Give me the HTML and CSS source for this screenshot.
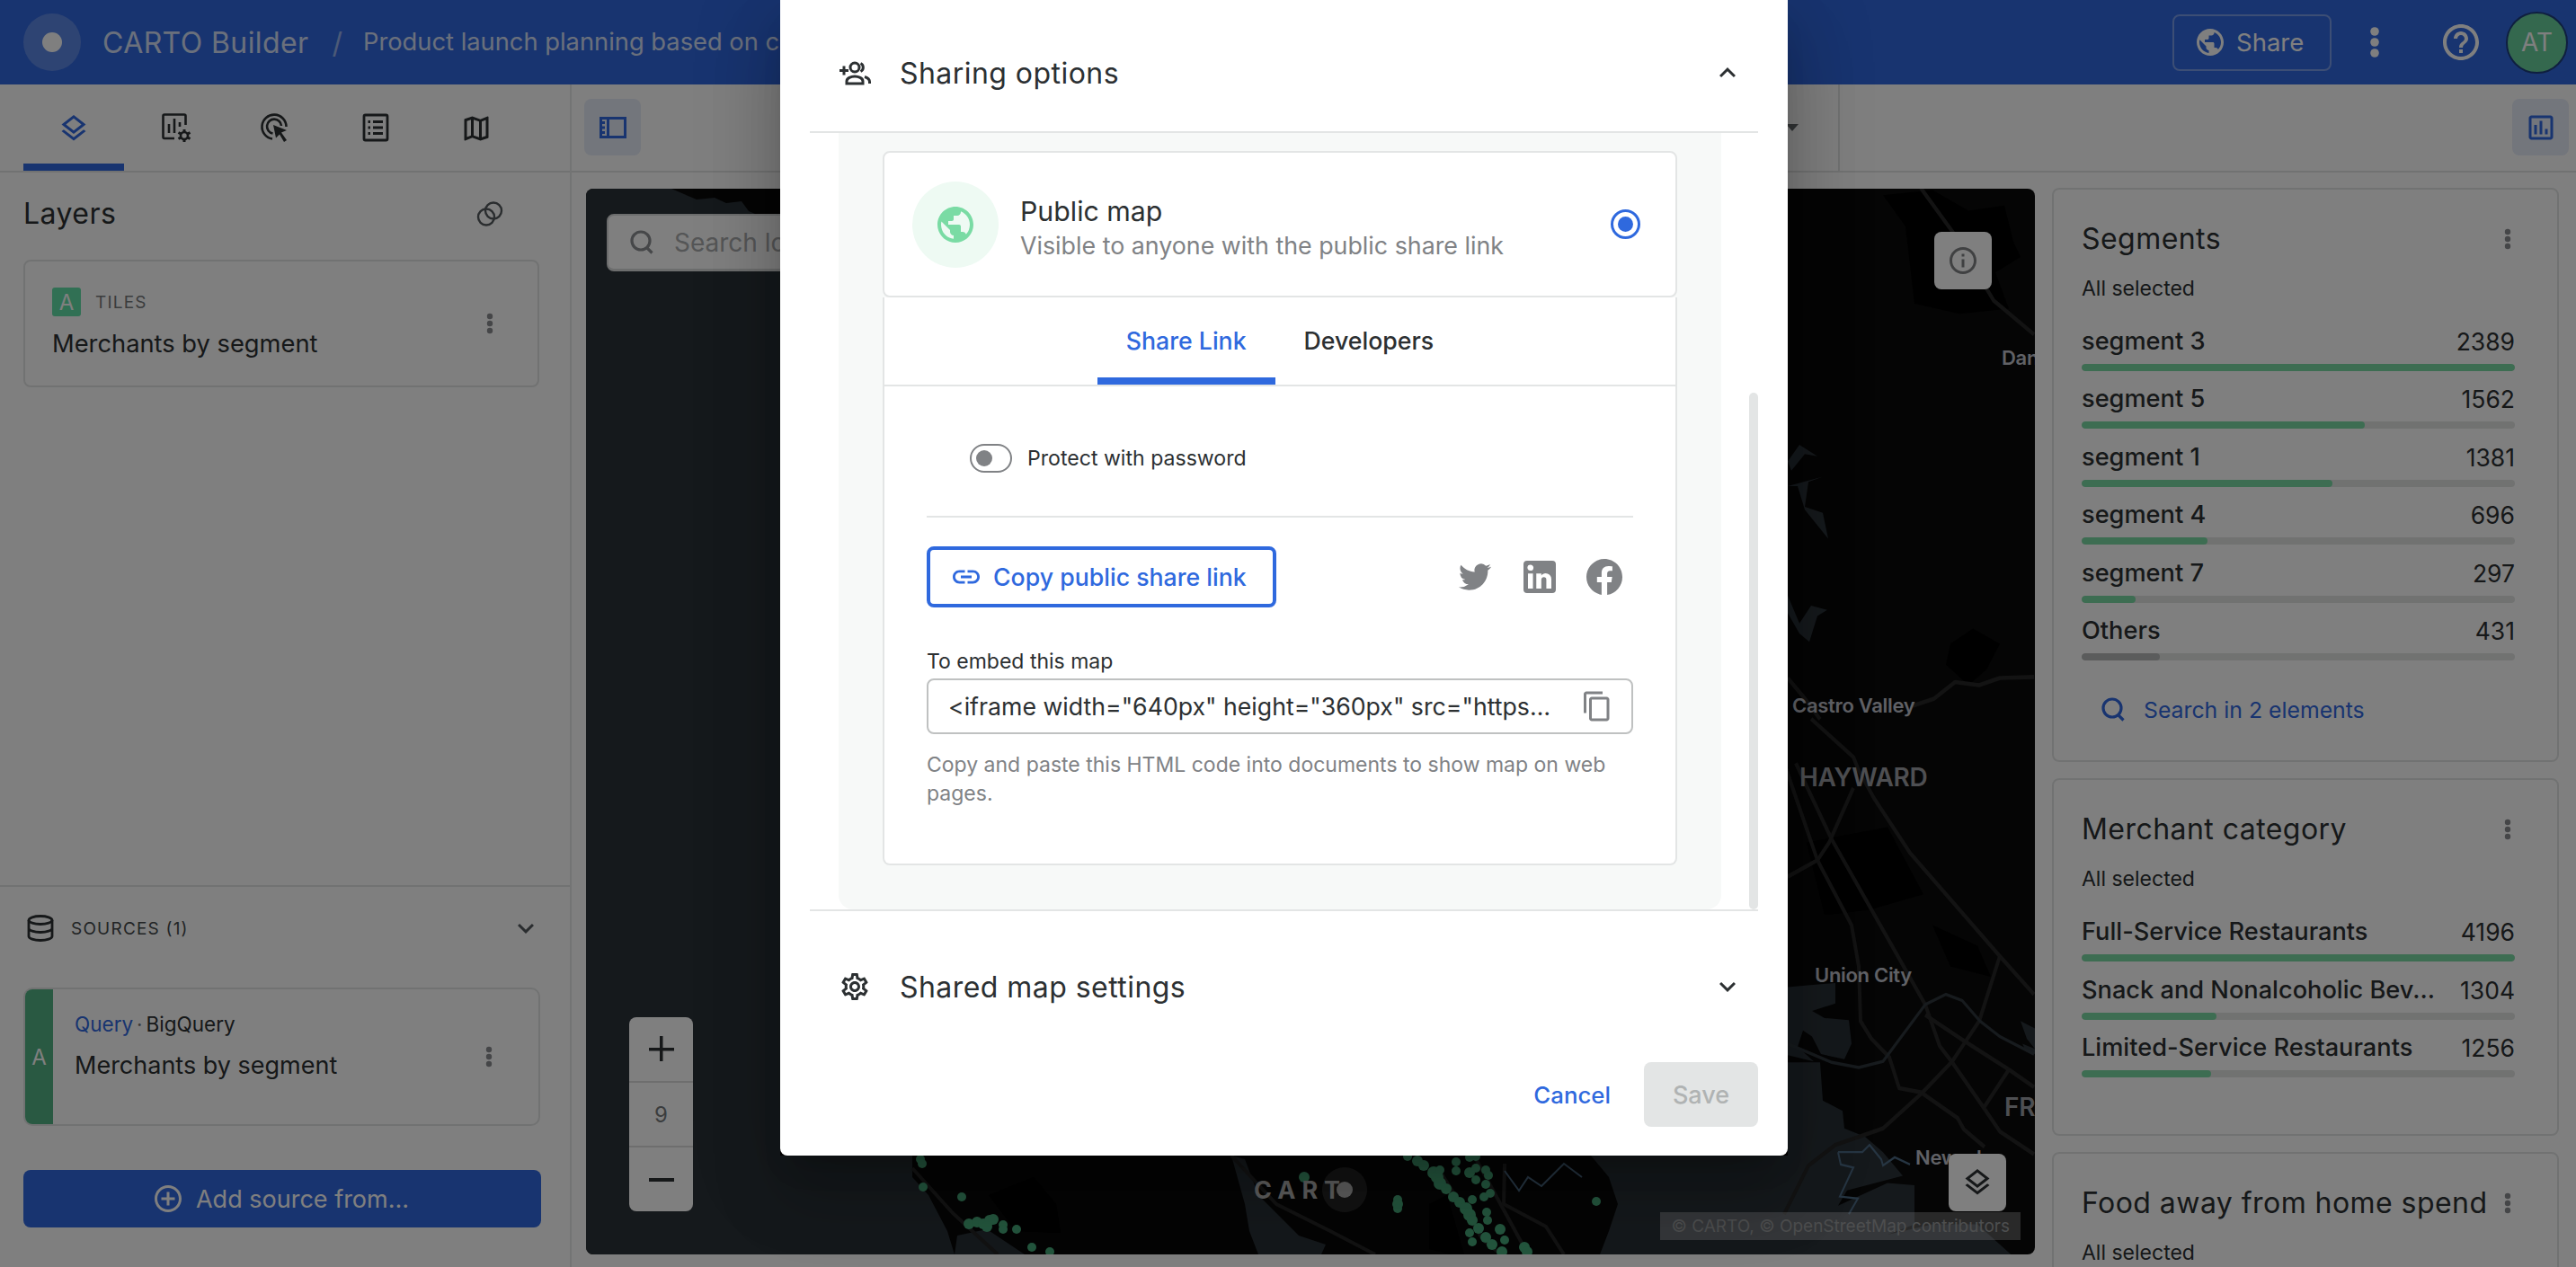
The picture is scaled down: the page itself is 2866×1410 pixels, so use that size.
FILE: index.html
```html
<!DOCTYPE html>
<html lang="en">
<head>
<meta charset="utf-8">
<title>CARTO Builder</title>
<link rel="stylesheet" href="styles.css">
</head>
<body>
<svg class="defs" aria-hidden="true">
  <symbol id="i-dots" viewBox="0 0 8 24"><circle cx="4" cy="4" r="3.2"/><circle cx="4" cy="12" r="3.2"/><circle cx="4" cy="20" r="3.2"/></symbol>
  <symbol id="i-layers" viewBox="0 0 24 24"><path d="M11.99 18.54l-7.37-5.73L3 14.07l9 7 9-7-1.63-1.27-7.38 5.74zM12 16l7.36-5.73L21 9l-9-7-9 7 1.63 1.27L12 16zm0-11.47L17.74 9 12 13.47 6.26 9 12 4.53z"/></symbol>
  <symbol id="i-globe" viewBox="0 0 24 24"><path d="M12 2C6.48 2 2 6.48 2 12s4.48 10 10 10 10-4.48 10-10S17.52 2 12 2zm-1 17.93c-3.95-.49-7-3.85-7-7.93 0-.62.08-1.21.21-1.79L9 15v1c0 1.1.9 2 2 2v1.93zm6.9-2.54c-.26-.81-1-1.39-1.9-1.39h-1v-3c0-.55-.45-1-1-1H8v-2h2c.55 0 1-.45 1-1V7h2c1.1 0 2-.9 2-2v-.41c2.93 1.19 5 4.06 5 7.41 0 2.08-.8 3.97-2.1 5.39z"/></symbol>
  <symbol id="i-search" viewBox="0 0 30 30"><circle cx="14" cy="13" r="10" fill="none" stroke="currentColor" stroke-width="3.2"/><path d="M20.5 20.5l6 6" fill="none" stroke="currentColor" stroke-width="3.2"/></symbol>
  <symbol id="i-down" viewBox="0 0 24 24"><path d="M16.59 8.59L12 13.17 7.41 8.59 6 10l6 6 6-6z"/></symbol>
  <symbol id="i-up" viewBox="0 0 24 24"><path d="M12 8l-6 6 1.41 1.41L12 10.83l4.59 4.58L18 14z"/></symbol>
</svg>

<div class="app">
  <header class="topbar">
    <div class="logo"><span class="logo-dot"></span></div>
    <span class="brand">CARTO Builder</span>
    <span class="slash">/</span>
    <span class="map-title">Product launch planning based on customer data</span>
    <div class="top-actions">
      <button class="share-btn"><svg class="icon-36 fill-current"><use href="#i-globe"/></svg><span>Share</span></button>
      <svg class="top-dots"><use href="#i-dots"/></svg>
      <svg class="icon-48 fill-current help" viewBox="0 0 24 24"><path d="M11 18h2v-2h-2v2zm1-16C6.48 2 2 6.48 2 12s4.48 10 10 10 10-4.48 10-10S17.52 2 12 2zm0 18c-4.41 0-8-3.59-8-8s3.59-8 8-8 8 3.59 8 8-3.59 8-8 8zm0-14c-2.21 0-4 1.79-4 4h2c0-1.1.9-2 2-2s2 .9 2 2c0 2-3 1.75-3 5h2c0-2.25 3-2.5 3-5 0-2.21-1.79-4-4-4z"/></svg>
      <div class="avatar">AT</div>
    </div>
  </header>

  <div class="main">
    <aside class="sidebar">
      <nav class="side-tabs">
        <div class="side-tab active"><svg class="icon-36 fill-current"><use href="#i-layers"/></svg></div>
        <div class="side-tab">
          <svg class="tab-svg tab-nudge" viewBox="0 0 34 34" fill="none" stroke="currentColor" stroke-width="2.6"><path d="M15 29H4a1.5 1.5 0 0 1-1.500-1.500V4A1.500 1.500 0 0 1 4 2.500h22A1.500 1.500 0 0 1 27.500 4v10"/><path d="M9 13v10M15 7v16M21 11v5"/><circle cx="26" cy="26" r="4" stroke-width="2.600"/><path d="M26 19v2.500M26 30.500V33M19.500 22.500l2.300 1.300M30.200 28.200l2.300 1.300M19.500 29.500l2.300-1.300M30.200 23.800l2.300-1.300" stroke-width="3"/></svg>
        </div>
        <div class="side-tab">
          <svg class="tab-svg" viewBox="0 0 34 34" fill="none" stroke="currentColor" stroke-width="2.600"><path d="M14 29.500A13.500 13.500 0 1 1 29.500 16"/><path d="M14.500 23.500A8 8 0 1 1 24 15"/><path d="M15 14l15 6-6 2.500L30 31l-3 2-5-8.500-4 4z" fill="currentColor" stroke="none"/></svg>
        </div>
        <div class="side-tab">
          <svg class="tab-svg" viewBox="0 0 34 34" fill="none" stroke="currentColor" stroke-width="2.800"><rect x="4" y="3" width="26" height="28" rx="1.500"/><path d="M14 10.500h11M14 17h11M14 23.500h11M8.500 10.500h2.500M8.500 17h2.500M8.500 23.500h2.500"/></svg>
        </div>
        <div class="side-tab"><svg class="icon-36 fill-current" viewBox="0 0 24 24"><path d="M20.500 3l-.16.03L15 5.100 9 3 3.360 4.900c-.21.07-.36.25-.36.48V20.500c0 .28.22.5.5.5l.16-.03L9 18.900l6 2.100 5.640-1.900c.21-.07.36-.25.36-.48V3.500c0-.28-.22-.5-.5-.5zM10 5.470l4 1.400v11.660l-4-1.400V5.470zm-5 .99l3-1.010v11.700l-3 1.160V6.460zm14 11.080l-3 1.010V6.860l3-1.160v11.840z"/></svg></div>
      </nav>

      <section class="layers">
        <div class="layers-head">
          <h2 class="h-title">Layers</h2>
          <svg class="merge" viewBox="0 0 30 28" fill="none" stroke="currentColor" stroke-width="2.400"><circle cx="11" cy="17.500" r="9"/><circle cx="19" cy="10.500" r="9"/></svg>
        </div>
        <div class="layer-card">
          <div class="layer-text">
            <div class="layer-kind"><span class="badge">A</span><span class="kind">TILES</span></div>
            <div class="layer-name">Merchants by segment</div>
          </div>
          <svg class="dots"><use href="#i-dots"/></svg>
        </div>
      </section>

      <section class="sources">
        <div class="sources-head">
          <svg class="db" viewBox="0 0 30 30" fill="none" stroke="currentColor" stroke-width="2.800"><ellipse cx="15" cy="6" rx="13" ry="4.500"/><path d="M2 6v18c0 2.500 5.800 4.500 13 4.500S28 26.500 28 24V6M2 15c0 2.500 5.800 4.500 13 4.500S28 17.500 28 15"/></svg>
          <span class="sources-label">SOURCES (1)</span>
          <svg class="icon-36 fill-grey chev"><use href="#i-down"/></svg>
        </div>
        <div class="source-card">
          <div class="source-strip">A</div>
          <div class="source-text">
            <div class="source-kind"><span class="blue">Query</span><span class="sep">·</span>BigQuery</div>
            <div class="source-name">Merchants by segment</div>
          </div>
          <svg class="dots"><use href="#i-dots"/></svg>
        </div>
        <button class="add-source">
          <svg class="icon-36 fill-current" viewBox="0 0 24 24"><path d="M13 7h-2v4H7v2h4v4h2v-4h4v-2h-4V7zm-1-5C6.480 2 2 6.480 2 12s4.480 10 10 10 10-4.480 10-10S17.520 2 12 2zm0 18c-4.410 0-8-3.590-8-8s3.590-8 8-8 8 3.590 8 8-3.590 8-8 8z"/></svg>
          <span>Add source from...</span>
        </button>
      </section>
    </aside>

    <div class="center">
      <div class="toolbar">
        <div class="tool-btn">
          <svg class="tool-icon" viewBox="0 0 30 24" fill="none" stroke="currentColor" stroke-width="3"><rect x="1.500" y="1.500" width="27" height="21"/><path d="M9.500 1.500v21"/><path d="M3 6.500h5M3 12h5M3 17.500h5" stroke-width="3" stroke-dasharray="3 2"/></svg>
        </div>
        <div class="tool-right">
          <span class="caret"></span>
          <span class="tool-divider"></span>
          <div class="tool-btn tool-last"><svg class="icon-36 fill-current" viewBox="0 0 24 24"><path d="M19 3H5c-1.100 0-2 .9-2 2v14c0 1.100.9 2 2 2h14c1.100 0 2-.9 2-2V5c0-1.100-.9-2-2-2zm0 16H5V5h14v14zM7 10h2v7H7zm4-3h2v10h-2zm4 6h2v4h-2z"/></svg></div>
        </div>
      </div>

      <div class="content">
        <div class="map">
          <svg class="map-canvas" viewBox="652 210 1612 1186" preserveAspectRatio="none">
            <rect class="land" x="652" y="210" width="1612" height="1186"/>
            <path class="water" d="M652 210H747L775 222 795 220 808 226 825 224 833 235 868 250V1286H1015L1015 1310 1033 1330 1054 1370 1062 1396H652Z"/>
            <path class="water" d="M1062 1396L1065 1375 1098 1368 1122 1384 1140 1396Z"/>
            <path class="water" d="M1370 1286L1385 1290 1400 1330 1420 1350 1445 1375 1475 1385 1470 1396H1400L1390 1370 1385 1340Z"/>
            <path class="water" d="M1770 1286L1790 1310 1800 1340 1790 1370 1780 1396H1989V1286Z"/>
            <path class="patch" d="M1100 1330L1150 1310 1175 1340 1180 1372 1130 1370ZM1590 1340L1610 1330 1630 1400 1590 1390Z"/>
            <g class="roads">
              <polyline points="1015,1300 1060,1350 1110,1396"/>
              <polyline points="1370,1286 1420,1340 1480,1370 1530,1396"/>
              <polyline points="1600,1300 1650,1380 1670,1396"/>
              <polyline points="1640,1286 1700,1396"/>
              <polyline points="1674,1295 1673,1340 1720,1365 1740,1396"/>
            </g>
            <polyline class="shore" points="1674,1303 1690,1325 1700,1310 1715,1320 1730,1305 1740,1295 1760,1310"/>

            <g class="map-upper">
              <path class="water" d="M1989 473L2002 457 2022 468 2008 466 1993 482ZM1989 497L2028 488 2012 493 2008 517 2028 523 2034 548 2008 520 2000 497ZM1989 603L2002 630 2015 613 2033 617 2022 623 2013 648 2002 640 1989 620Z"/>
              <path class="patch" d="M2095 215L2150 210 2190 230 2230 225 2240 260 2248 275 2220 290 2235 325 2180 330 2130 320 2120 245ZM2170 650L2195 635 2225 650 2210 675 2190 690 2165 670Z"/>
              <g class="roads">
                <polyline points="2137,208 2172,250 2218,317 2263,350"/>
                <polyline points="2128,710 2152,703 2175,687 2202,690 2225,683 2263,682"/>
                <polyline points="1989,683 2008,703 2025,723"/>
              </g>
            </g>

            <g class="map-lower">
              <path class="water" d="M1989 1060L2042 1056 2042 1076 2016 1083 2030 1090 2057 1092 2060 1115 2052 1130 2026 1125 2016 1108 2006 1102 2000 1118 2018 1132 1989 1126ZM1989 1133L2025 1133 2028 1170 2050 1180 2052 1197 2075 1205 2095 1220 2117 1243 2055 1257 2045 1272 2100 1250 2130 1252 2130 1290 2100 1300 2150 1290 2200 1290 2264 1340V1396H1989Z"/>
              <path class="water" d="M2248 1093L2264 1100V1120L2255 1110ZM2250 1115L2264 1120V1125L2254 1122Z"/>
              <path class="patch" d="M2010 920L2100 905 2140 970 2080 985 2030 990ZM2150 1000L2200 1020 2215 1050 2170 1040Z"/>
              <g class="roads">
                <polyline points="2015,800 2062,837 2068,850 2085,877 2125,930 2225,1030 2263,1067"/>
                <polyline points="1985,843 2022,937 2060,1000 2068,1040 2070,1093 2082,1110 2102,1128 2113,1158 2137,1162 2178,1187 2185,1198 2208,1215"/>
                <polyline points="1998,843 2038,917 2142,1077 2158,1117 2172,1133 2207,1177 2225,1200 2263,1222"/>
                <polyline points="2062,867 2035,920 2022,937 1989,953"/>
                <polyline points="2225,1030 2202,1093 2172,1132 2138,1163 2095,1197 2042,1213 2012,1233 1985,1280"/>
                <polyline points="2142,1087 2185,1112 2235,1140 2263,1157"/>
                <polyline points="2235,1140 2207,1177"/>
              </g>
              <polyline class="ferry" points="1989,1115 2038,1133 2068,1138 2095,1132 2142,1077 2165,1067 2183,1073 2203,1093 2225,1108 2263,1125"/>
              <polyline class="shore" points="2045,1220 2072,1220 2080,1213 2093,1227 2095,1233 2108,1225 2125,1232"/>
              <polyline class="shore" points="2045,1220 2048,1232 2062,1235 2047,1263 2067,1265 2057,1280"/>
            </g>

            <g class="dots-layer">
              <circle cx="1024" cy="1290" r="5"/><circle cx="1026" cy="1295" r="5"/><circle cx="1027" cy="1321" r="5"/><circle cx="1070" cy="1332" r="5"/><circle cx="1078" cy="1362" r="6"/><circle cx="1087" cy="1360" r="6"/><circle cx="1094" cy="1362" r="6"/><circle cx="1101" cy="1358" r="6"/><circle cx="1105" cy="1357" r="6"/><circle cx="1098" cy="1365" r="6"/><circle cx="1116" cy="1363" r="5"/><circle cx="1116" cy="1368" r="5"/><circle cx="1131" cy="1368" r="5"/><circle cx="1148" cy="1388" r="5"/><circle cx="1168" cy="1393" r="5"/>
              <circle cx="1451" cy="1310" r="6"/><circle cx="1555" cy="1335" r="5"/><circle cx="1555" cy="1340" r="6"/><circle cx="1555" cy="1345" r="5"/>
              <circle cx="1566" cy="1287" r="5"/><circle cx="1577" cy="1292" r="6"/><circle cx="1584" cy="1297" r="6"/><circle cx="1595" cy="1305" r="7"/><circle cx="1599" cy="1310" r="7"/><circle cx="1602" cy="1317" r="7"/><circle cx="1609" cy="1323" r="6"/><circle cx="1617" cy="1332" r="6"/><circle cx="1624" cy="1338" r="6"/><circle cx="1631" cy="1345" r="7"/><circle cx="1635" cy="1352" r="7"/><circle cx="1638" cy="1358" r="6"/><circle cx="1645" cy="1367" r="6"/><circle cx="1653" cy="1377" r="6"/><circle cx="1660" cy="1385" r="6"/><circle cx="1671" cy="1393" r="6"/>
              <circle cx="1602" cy="1302" r="5"/><circle cx="1620" cy="1293" r="5"/><circle cx="1635" cy="1288" r="5"/><circle cx="1642" cy="1287" r="5"/><circle cx="1620" cy="1303" r="5"/><circle cx="1635" cy="1305" r="6"/><circle cx="1642" cy="1300" r="5"/><circle cx="1653" cy="1302" r="5"/><circle cx="1656" cy="1308" r="5"/><circle cx="1642" cy="1313" r="5"/><circle cx="1653" cy="1318" r="5"/><circle cx="1658" cy="1328" r="5"/><circle cx="1651" cy="1332" r="5"/><circle cx="1638" cy="1335" r="5"/><circle cx="1654" cy="1349" r="5"/><circle cx="1655" cy="1358" r="5"/><circle cx="1669" cy="1368" r="6"/><circle cx="1674" cy="1380" r="5"/><circle cx="1635" cy="1372" r="5"/><circle cx="1638" cy="1382" r="5"/><circle cx="1696" cy="1388" r="6"/><circle cx="1699" cy="1393" r="6"/><circle cx="1776" cy="1337" r="5"/>
            </g>
            <circle class="carto-halo" cx="1496" cy="1324" r="25"/>
            <text class="carto-word" x="1395" y="1334">CART</text>
            <circle class="carto-o" cx="1496" cy="1324" r="9"/>
            <g class="place">
              <text x="2227" y="406">Danville</text>
              <text x="1994" y="793">Castro Valley</text>
              <text x="2019" y="1093">Union City</text>
              <text x="2131" y="1296">Newark</text>
            </g>
            <g class="place place-big">
              <text x="2002" y="875">HAYWARD</text>
              <text x="2230" y="1242">FREMONT</text>
            </g>
          </svg>

          <div class="map-search">
            <svg class="icon-30"><use href="#i-search"/></svg>
            <span>Search location</span>
          </div>
          <div class="map-btn map-info"><svg class="icon-36 fill-current" viewBox="0 0 24 24"><path d="M11 7h2v2h-2zm0 4h2v6h-2zm1-9C6.480 2 2 6.480 2 12s4.480 10 10 10 10-4.480 10-10S17.520 2 12 2zm0 18c-4.410 0-8-3.590-8-8s3.590-8 8-8 8 3.590 8 8-3.590 8-8 8z"/></svg></div>
          <div class="map-zoom">
            <div class="zoom-cell"><span class="plus"></span></div>
            <div class="zoom-cell zoom-val">9</div>
            <div class="zoom-cell"><span class="minus"></span></div>
          </div>
          <div class="map-btn map-layers"><svg class="icon-36 fill-dark"><use href="#i-layers"/></svg></div>
          <div class="attribution">© CARTO, © OpenStreetMap contributors</div>
        </div>

        <div class="widgets">
          <article class="widget">
            <div class="widget-head"><h3 class="h-title">Segments</h3><svg class="dots"><use href="#i-dots"/></svg></div>
            <div class="selected">All selected</div>
            <div class="rows">
              <div class="row"><div class="row-line"><span class="row-name">segment 3</span><span class="row-val">2389</span></div><div class="track"><div class="fill" style="width:482px"></div></div></div>
              <div class="row"><div class="row-line"><span class="row-name">segment 5</span><span class="row-val">1562</span></div><div class="track"><div class="fill" style="width:315px"></div></div></div>
              <div class="row"><div class="row-line"><span class="row-name">segment 1</span><span class="row-val">1381</span></div><div class="track"><div class="fill" style="width:279px"></div></div></div>
              <div class="row"><div class="row-line"><span class="row-name">segment 4</span><span class="row-val">696</span></div><div class="track"><div class="fill" style="width:140px"></div></div></div>
              <div class="row"><div class="row-line"><span class="row-name">segment 7</span><span class="row-val">297</span></div><div class="track"><div class="fill" style="width:60px"></div></div></div>
              <div class="row"><div class="row-line"><span class="row-name">Others</span><span class="row-val">431</span></div><div class="track"><div class="fill fill-grey-bar" style="width:87px"></div></div></div>
            </div>
            <div class="widget-search"><svg class="icon-30"><use href="#i-search"/></svg><span>Search in 2 elements</span></div>
          </article>

          <article class="widget widget-b">
            <div class="widget-head"><h3 class="h-title">Merchant category</h3><svg class="dots"><use href="#i-dots"/></svg></div>
            <div class="selected">All selected</div>
            <div class="rows">
              <div class="row"><div class="row-line"><span class="row-name">Full-Service Restaurants</span><span class="row-val">4196</span></div><div class="track"><div class="fill" style="width:482px"></div></div></div>
              <div class="row"><div class="row-line"><span class="row-name">Snack and Nonalcoholic Bev...</span><span class="row-val">1304</span></div><div class="track"><div class="fill" style="width:150px"></div></div></div>
              <div class="row"><div class="row-line"><span class="row-name">Limited-Service Restaurants</span><span class="row-val">1256</span></div><div class="track"><div class="fill" style="width:144px"></div></div></div>
            </div>
          </article>

          <article class="widget">
            <div class="widget-head"><h3 class="h-title">Food away from home spend</h3><svg class="dots"><use href="#i-dots"/></svg></div>
            <div class="selected">All selected</div>
          </article>
        </div>
      </div>
    </div>
  </div>
</div>

<div class="scrim"></div>

<div class="modal">
  <div class="acc-head acc-open">
    <svg class="acc-icon" viewBox="0 0 36 30" fill="none" stroke="currentColor" stroke-width="3"><path d="M1 12.500h10M6 7.500v10"/><circle cx="18" cy="9" r="5"/><path d="M9 27v-2.500c0-3.500 5-5.500 9-5.500s9 2 9 5.500V27z"/><path d="M24.500 4.500a5 5 0 0 1 0 9M29 19.500c3 1 5.500 2.800 5.500 5.500V27"/></svg>
    <span class="acc-title">Sharing options</span>
    <svg class="icon-36 fill-dark"><use href="#i-up"/></svg>
  </div>

  <div class="modal-body">
    <div class="panel">
      <div class="public-card">
        <div class="globe-wrap"><svg class="icon-48 fill-green"><use href="#i-globe"/></svg></div>
        <div class="public-text">
          <div class="public-title">Public map</div>
          <div class="public-sub">Visible to anyone with the public share link</div>
        </div>
        <span class="radio"><span class="radio-dot"></span></span>
      </div>
      <div class="share-card">
        <div class="share-tabs">
          <div class="share-tab active">Share Link</div>
          <div class="share-tab">Developers</div>
        </div>
        <div class="share-body">
          <div class="protect">
            <span class="switch"><span class="knob"></span></span>
            <span class="protect-label">Protect with password</span>
          </div>
          <hr class="rule">
          <div class="copy-row">
            <button class="copy-btn">
              <svg class="icon-36 fill-current" viewBox="0 0 24 24"><path d="M3.900 12c0-1.710 1.390-3.100 3.100-3.100h4V7H7c-2.760 0-5 2.240-5 5s2.240 5 5 5h4v-1.900H7c-1.710 0-3.100-1.390-3.100-3.100zM8 13h8v-2H8v2zm9-6h-4v1.900h4c1.710 0 3.100 1.390 3.100 3.100s-1.390 3.100-3.100 3.100h-4V17h4c2.760 0 5-2.240 5-5s-2.240-5-5-5z"/></svg>
              <span>Copy public share link</span>
            </button>
            <div class="socials">
              <svg class="soc-tw fill-social" viewBox="0 0 24 24"><path d="M23.953 4.570a10 10 0 01-2.825.775 4.958 4.958 0 002.163-2.723c-.951.555-2.005.959-3.127 1.184a4.920 4.920 0 00-8.384 4.482C7.690 8.095 4.067 6.130 1.640 3.162a4.822 4.822 0 00-.666 2.475c0 1.710.870 3.213 2.188 4.096a4.904 4.904 0 01-2.228-.616v.060a4.923 4.923 0 003.946 4.827 4.996 4.996 0 01-2.212.085 4.936 4.936 0 004.604 3.417 9.867 9.867 0 01-6.102 2.105c-.39 0-.779-.023-1.170-.067a13.995 13.995 0 007.557 2.209c9.053 0 13.998-7.496 13.998-13.985 0-.21 0-.42-.015-.63A9.935 9.935 0 0024 4.590z"/></svg>
              <svg class="icon-48 fill-social" viewBox="0 0 24 24"><path d="M19 3a2 2 0 0 1 2 2v14a2 2 0 0 1-2 2H5a2 2 0 0 1-2-2V5a2 2 0 0 1 2-2h14m-.5 15.500v-5.300a3.260 3.260 0 0 0-3.260-3.260c-.85 0-1.840.52-2.320 1.300v-1.110h-2.790v8.370h2.790v-4.930c0-.77.62-1.400 1.390-1.400a1.400 1.400 0 0 1 1.400 1.400v4.930h2.790M6.880 8.560a1.680 1.680 0 0 0 1.680-1.680c0-.93-.75-1.690-1.680-1.690a1.690 1.690 0 0 0-1.690 1.690c0 .93.76 1.680 1.690 1.680m1.390 9.940v-8.370H5.500v8.370h2.770z"/></svg>
              <svg class="icon-48 fill-social" viewBox="0 0 24 24"><path d="M12 2.040c-5.500 0-10 4.490-10 10.020 0 5 3.660 9.150 8.440 9.900v-7H7.900v-2.900h2.540V9.850c0-2.510 1.490-3.890 3.780-3.890 1.090 0 2.230.19 2.230.19v2.470h-1.260c-1.240 0-1.630.77-1.630 1.560v1.880h2.780l-.45 2.900h-2.330v7a10 10 0 0 0 8.440-9.900c0-5.530-4.500-10.020-10-10.020z"/></svg>
            </div>
          </div>
          <div class="embed-label">To embed this map</div>
          <div class="embed-input">
            <span class="embed-code">&lt;iframe width="640px" height="360px" src="https://clausa.app.carto.com/map/7f2c"&gt;&lt;/iframe&gt;</span>
            <svg class="icon-36 fill-social" viewBox="0 0 24 24"><path d="M16 1H4c-1.100 0-2 .9-2 2v14h2V3h12V1zm3 4H8c-1.100 0-2 .9-2 2v14c0 1.100.9 2 2 2h11c1.100 0 2-.9 2-2V7c0-1.100-.9-2-2-2zm0 16H8V7h11v14z"/></svg>
          </div>
          <p class="helper">Copy and paste this HTML code into documents to show map on web pages.</p>
        </div>
      </div>
    </div>
    <div class="scrollbar"></div>
  </div>

  <div class="acc-head acc-closed">
    <svg class="icon-36 fill-dark" viewBox="0 0 24 24"><path d="M19.430 12.980c.04-.32.07-.64.07-.98 0-.34-.03-.66-.07-.98l2.110-1.650c.19-.15.24-.42.12-.64l-2-3.460c-.09-.16-.26-.25-.44-.25-.06 0-.12.01-.17.03l-2.490 1c-.52-.4-1.080-.73-1.690-.98l-.38-2.650C14.460 2.180 14.250 2 14 2h-4c-.25 0-.46.18-.49.42l-.38 2.650c-.61.25-1.170.59-1.690.98l-2.490-1c-.06-.02-.12-.03-.18-.03-.17 0-.34.09-.43.25l-2 3.460c-.13.22-.07.49.12.64l2.110 1.650c-.04.32-.07.65-.07.98 0 .33.03.66.07.98l-2.110 1.650c-.19.15-.24.42-.12.64l2 3.460c.09.16.26.25.44.25.06 0 .12-.01.17-.03l2.490-1c.52.4 1.080.73 1.690.98l.38 2.650c.03.24.24.42.49.42h4c.25 0 .46-.18.49-.42l.38-2.650c.61-.25 1.170-.59 1.690-.98l2.490 1c.06.02.12.03.18.03.17 0 .34-.09.43-.25l2-3.460c.12-.22.07-.49-.12-.64l-2.110-1.650zm-1.980-1.710c.04.31.05.52.05.73 0 .21-.02.43-.05.73l-.14 1.130.89.7 1.080.84-.7 1.210-1.270-.51-1.040-.42-.9.68c-.43.32-.84.56-1.250.73l-1.060.43-.16 1.130-.2 1.350h-1.400l-.19-1.350-.16-1.130-1.060-.43c-.43-.18-.83-.41-1.230-.71l-.91-.7-1.060.43-1.270.51-.7-1.210 1.080-.84.89-.7-.14-1.130c-.03-.31-.05-.54-.05-.74s.02-.43.05-.73l.14-1.130-.89-.7-1.080-.84.7-1.210 1.270.51 1.040.42.9-.68c.43-.32.84-.56 1.250-.73l1.060-.43.16-1.130.2-1.350h1.390l.19 1.350.16 1.130 1.060.43c.43.18.83.41 1.230.71l.91.7 1.060-.43 1.270-.51.7 1.210-1.070.85-.89.7.14 1.130zM12 8c-2.210 0-4 1.790-4 4s1.790 4 4 4 4-1.790 4-4-1.790-4-4-4zm0 6c-1.100 0-2-.9-2-2s.9-2 2-2 2 .9 2 2-.9 2-2 2z"/></svg>
    <span class="acc-title">Shared map settings</span>
    <svg class="icon-36 fill-dark"><use href="#i-down"/></svg>
  </div>

  <div class="modal-actions">
    <button class="btn-cancel">Cancel</button>
    <button class="btn-save">Save</button>
  </div>
</div>
</body>
</html>
```

FILE: styles.css
```css
* { box-sizing: border-box; }
html, body { margin: 0; height: 100%; }
body {
  position: relative;
  width: 2866px;
  height: 1410px;
  overflow: hidden;
  font-family: Inter, "Liberation Sans", sans-serif;
  color: #2c3032;
  background: #fff;
}
button { font-family: inherit; cursor: pointer; }
h2, h3, p, hr { margin: 0; }
.defs { position: absolute; width: 0; height: 0; }

.icon-30 { width: 30px; height: 30px; flex: none; }
.icon-36 { width: 36px; height: 36px; flex: none; }
.icon-48 { width: 48px; height: 48px; flex: none; }
.fill-current { fill: currentColor; }
.fill-dark { fill: #2c3032; }
.fill-grey { fill: #555a5e; }
.fill-green { fill: #7adba4; }
.fill-social { fill: #808285; }

.app { display: flex; flex-direction: column; height: 1410px; }

/* top bar */
.topbar {
  height: 94px;
  flex: none;
  background: #3068e0;
  color: #fff;
  display: flex;
  align-items: center;
  padding: 0 9px 0 26px;
}
.logo {
  width: 64px; height: 64px; border-radius: 50%;
  background: rgba(255,255,255,.22);
  display: flex; align-items: center; justify-content: center;
}
.logo-dot { width: 22px; height: 22px; border-radius: 50%; background: #fff; }
.brand { margin-left: 24px; font-size: 32px; letter-spacing: .4px; opacity: .8; }
.slash { margin-left: 26px; font-size: 32px; opacity: .5; }
.map-title { margin-left: 23px; margin-top: -2px; font-size: 27.3px; opacity: .8; white-space: nowrap; }
.top-actions { margin-left: auto; display: flex; align-items: center; }
.share-btn {
  width: 177px; height: 63px;
  background: transparent; color: #fff;
  border: 2px solid rgba(255,255,255,.35); border-radius: 8px;
  display: flex; align-items: center; padding: 0 0 0 22px; gap: 11px;
  font-size: 27.5px;
}
.top-dots { width: 12px; height: 36px; margin-left: 42px; fill: #fff; }
.help { margin-left: 66px; }
.avatar {
  width: 69px; height: 69px; border-radius: 50%;
  margin-left: 26px;
  background: #68d09c;
  border: 2px solid #1e3f7e;
  color: #fff; font-size: 28px;
  display: flex; align-items: center; justify-content: center;
}

.main { flex: 1; display: flex; min-height: 0; }

/* left sidebar */
.sidebar {
  width: 636px; flex: none;
  border-right: 2px solid #e6e8e8;
  display: flex; flex-direction: column;
}
.side-tabs {
  height: 98px; flex: none;
  border-bottom: 2px solid #e3e5e5;
  display: flex; padding-left: 26px;
  color: #2c3032;
}
.side-tab {
  width: 112px;
  display: flex; align-items: flex-start; justify-content: center;
  padding-top: 31px;
  border-bottom: 8px solid transparent;
}
.side-tab.active { color: #3068e0; border-bottom-color: #3068e0; }
.tab-svg { width: 34px; height: 34px; }
.tab-nudge { margin-left: 3px; }
.layers { flex: 1; padding: 26px 34px 0 26px; }
.layers-head { display: flex; align-items: center; justify-content: space-between; height: 40px; padding-right: 40px; }
.h-title { font-size: 32px; font-weight: 400; letter-spacing: .45px; line-height: 40px; color: #2c3032; }
.merge { width: 30px; height: 28px; color: #555a5e; }
.layer-card {
  margin-top: 31px;
  height: 142px;
  border: 2px solid #e3e5e5; border-radius: 8px;
  display: flex; align-items: center; padding: 0 49px 0 30px;
}
.layer-text { flex: 1; }
.layer-kind { display: flex; align-items: center; gap: 16px; }
.badge {
  width: 32px; height: 32px; border-radius: 3px;
  background: #62e0a8; color: #fff; font-size: 24px;
  display: flex; align-items: center; justify-content: center;
}
.kind { font-size: 19px; letter-spacing: 1.2px; color: #777a7d; }
.layer-name { margin-top: 14px; font-size: 27.3px; line-height: 34px; }
.dots { width: 8px; height: 24px; fill: #8a8d90; flex: none; }

.sources {
  flex: none;
  height: 425px;
  border-top: 2px solid #e3e5e5;
  padding: 26px 33px 0 26px;
}
.sources-head { display: flex; align-items: center; height: 40px; padding-left: 4px; }
.db { width: 30px; height: 30px; }
.sources-label { margin-left: 19px; font-size: 19px; letter-spacing: 1.2px; color: #44484b; }
.chev { margin-left: auto; margin-right: -2px; }
.source-card {
  margin-top: 46px;
  height: 154px;
  border: 2px solid #e3e5e5; border-radius: 10px;
  display: flex; align-items: center; overflow: hidden;
  padding-right: 51px;
}
.source-strip {
  width: 31px; align-self: stretch; flex: none;
  background: #52b285; color: #fff; font-size: 24px;
  display: flex; align-items: center; justify-content: center;
}
.source-text { flex: 1; padding-left: 24px; padding-bottom: 26px; }
.source-kind { font-size: 22.500px; line-height: 32px; }
.blue { color: #3068e0; }
.sep { color: #777; margin: 0 4px; }
.source-name { margin-top: 13px; font-size: 27px; line-height: 34px; }
.add-source {
  margin-top: 49px;
  width: 576px; height: 64px;
  background: #3068e0; color: #fff;
  border: 0; border-radius: 8px;
  display: flex; align-items: center; justify-content: center; gap: 13px;
  padding-right: 10px;
  font-size: 27px;
}

/* center + right */
.center { flex: 1; min-width: 0; display: flex; flex-direction: column; }
.toolbar {
  height: 98px; flex: none;
  border-bottom: 2px solid #e3e5e5;
  display: flex; align-items: flex-start;
  padding-left: 14px;
}
.tool-btn {
  width: 63px; height: 63px; margin-top: 16px;
  border-radius: 8px; background: #e6ecf8; color: #3068e0;
  display: flex; align-items: center; justify-content: center;
}
.tool-icon { width: 30px; height: 24px; }
.tool-right { margin-left: auto; display: flex; align-items: flex-start; height: 96px; }
.caret {
  width: 0; height: 0; margin-top: 44px;
  border: 7px solid transparent; border-top: 8px solid #666a6d; border-bottom: 0;
}
.tool-divider { width: 2px; height: 96px; background: #e3e5e5; margin-left: 44px; margin-right: 748px; }
.tool-last { margin-right: 8px; }

.content { flex: 1; min-height: 0; display: flex; }

/* map */
.map {
  position: relative;
  width: 1612px; flex: none;
  margin: 18px 0 14px 16px;
  border-radius: 8px; overflow: hidden;
}
.map-canvas { display: block; width: 1612px; height: 1186px; }
.map-upper { transform: translateY(200px) scaleY(1.148) translateY(-200px); }
.map-lower { transform: translateY(800px) scaleY(1.148) translateY(-800px); }
.land { fill: #0a0a0a; }
.water { fill: #2b3238; }
.patch { fill: #000; }
.roads polyline { fill: none; stroke: #262626; stroke-width: 4; stroke-linejoin: round; }
.ferry { fill: none; stroke: #2f363c; stroke-width: 3; }
.shore { fill: none; stroke: #4d6a85; stroke-width: 2; }
.dots-layer circle { fill: #48ac7c; }
.carto-halo { fill: rgba(255,255,255,.12); }
.carto-word { font: 700 27px Inter, sans-serif; letter-spacing: 7px; fill: #bcbcbc; }
.carto-o { fill: #bcbcbc; }
.place text { font: 600 22px Inter, sans-serif; fill: #c0c3cc; letter-spacing: -.3px; }
.place-big text { font-size: 28px; fill: #9c9ea4; }

.map-search {
  position: absolute; left: 23px; top: 28px;
  width: 560px; height: 64px;
  background: #fff; border-radius: 8px;
  border: 2px solid #d8dadb; border-bottom-width: 3px;
  display: flex; align-items: center; gap: 21px; padding-left: 22px;
  font-size: 28px; color: #aaacae;
}
.map-search svg { color: #8c8f92; }
.map-btn {
  position: absolute; width: 64px; height: 64px;
  background: #fff; border-radius: 8px;
  display: flex; align-items: center; justify-content: center;
}
.map-info { left: 1500px; top: 48px; color: #808285; }
.map-layers { left: 1516px; top: 1074px; }
.map-zoom {
  position: absolute; left: 48px; top: 922px;
  width: 71px; height: 216px;
  background: #fff; border-radius: 8px;
  display: flex; flex-direction: column;
}
.zoom-cell { flex: 1; display: flex; align-items: center; justify-content: center; }
.zoom-val { border-top: 2px solid #ddd; border-bottom: 2px solid #ddd; font-size: 24px; color: #777a7d; }
.plus { width: 28px; height: 28px; display: block;
  background: linear-gradient(#2c3032,#2c3032) center/100% 3.500px no-repeat, linear-gradient(#2c3032,#2c3032) center/3.500px 100% no-repeat; }
.minus { width: 28px; height: 4px; display: block; background: #2c3032; }
.attribution {
  position: absolute; right: 16px; top: 1139px;
  height: 31px; padding: 0 12px;
  display: flex; align-items: center;
  background: rgba(255,255,255,.3);
  font-size: 19px; color: #9a9c9e;
  white-space: nowrap;
}

/* widgets */
.widgets {
  flex: 1; min-width: 0; overflow: hidden;
  padding: 17px 19px 0;
  display: flex; flex-direction: column; gap: 18px;
}
.widget {
  flex: none;
  border: 2px solid #e3e5e5; border-radius: 8px;
  padding: 35px 47px 36px 31px;
}
.widget-b { padding-bottom: 47px; }
.widget-head { display: flex; align-items: center; justify-content: space-between; height: 40px; padding-right: 4px; }
.selected { margin-top: 19px; font-size: 23px; line-height: 32px; color: #2c3032; }
.rows { margin-top: 27px; }
.row { height: 64.4px; }
.row-line { display: flex; justify-content: space-between; font-size: 27.200px; line-height: 32px; white-space: nowrap; height: 32px; }
.row-name { font-weight: 500; }
.row-val { font-weight: 400; font-size: 26.500px; }
.track { margin-top: 9px; height: 8px; border-radius: 4px; background: #e2e4e3; overflow: hidden; }
.fill { height: 8px; border-radius: 4px; background: #7adba4; }
.fill-grey-bar { background: #b6b8b8; }
.widget-search {
  margin-top: 20px; height: 40px;
  display: flex; align-items: center; gap: 19px; padding-left: 20px;
  color: #3068e0; font-size: 24.800px;
}

/* scrim + modal */
.scrim { position: absolute; inset: 0; background: rgba(0,0,0,.5); }
.modal {
  position: absolute; left: 868px; top: 0;
  width: 1121px; height: 1286px;
  background: #fff;
  border-radius: 0 0 8px 8px;
  box-shadow: 0 22px 30px -14px rgba(0,0,0,.2), 0 48px 76px 6px rgba(0,0,0,.14), 0 18px 92px 16px rgba(0,0,0,.12);
  padding: 0 33px 32px;
  display: flex; flex-direction: column;
}
.acc-head { display: flex; align-items: center; padding: 0 16px 0 32px; flex: none; }
.acc-open { height: 148px; padding-top: 16px; border-bottom: 2px solid #e3e5e5; }
.acc-closed { height: 170px; border-top: 2px solid #e3e5e5; }
.acc-icon { width: 36px; height: 30px; color: #2c3032; flex: none; }
.acc-title { flex: 1; margin-left: 32px; font-size: 32px; font-weight: 400; letter-spacing: .45px; }
.modal-body { position: relative; flex: none; height: 864px; }
.panel {
  margin: 0 41px 0 32px;
  height: 864px;
  background: #f7f9f8;
  border-radius: 0 0 16px 16px;
  padding: 20px 49px 0;
}
.public-card {
  height: 163px;
  background: #fff;
  border: 2px solid #e3e5e5; border-radius: 8px;
  display: flex; align-items: center;
  padding: 0 39px 0 31px;
}
.globe-wrap {
  width: 96px; height: 96px; border-radius: 50%;
  background: #eefaf3; flex: none;
  display: flex; align-items: center; justify-content: center;
}
.public-text { flex: 1; margin-left: 24px; padding-top: 6px; }
.public-title { font-size: 30.300px; line-height: 40px; }
.public-sub { font-size: 26.800px; line-height: 36px; color: #808285; }
.radio {
  width: 33px; height: 33px; border-radius: 50%;
  border: 3px solid #2f69de; flex: none;
  display: flex; align-items: center; justify-content: center;
}
.radio-dot { width: 17px; height: 17px; border-radius: 50%; background: #2f69de; }
.share-card {
  height: 632px;
  background: #fff;
  border: 2px solid #e3e5e5; border-top: 0;
  border-radius: 0 0 8px 8px;
}
.share-tabs {
  height: 99px;
  border-bottom: 2px solid #e3e5e5;
  display: flex; justify-content: center;
}
.share-tab {
  padding: 7px 32px 0; height: 97px;
  display: flex; align-items: center;
  font-size: 26.700px; font-weight: 500;
  border-bottom: 8px solid transparent;
}
.share-tab.active { color: #2f69de; border-bottom-color: #2f69de; }
.share-body { padding: 64px 47px 0; }
.protect { display: flex; align-items: center; height: 32px; padding-left: 48px; }
.switch {
  width: 47px; height: 32px; border-radius: 16px;
  border: 2px solid #808285; flex: none;
  display: flex; align-items: center; padding-left: 5px;
}
.knob { width: 18px; height: 18px; border-radius: 50%; background: #808285; }
.protect-label { margin-left: 17px; font-size: 23.100px; }
.rule { margin-top: 48px; height: 2px; border: 0; background: #e3e5e5; }
.copy-row { margin-top: 32px; display: flex; align-items: center; justify-content: space-between; padding-right: 8px; }
.copy-btn {
  width: 389px; height: 68px;
  background: #fff; color: #2f69de;
  border: 4px solid #2f69de; border-radius: 8px;
  display: flex; align-items: center; gap: 12px; padding: 0 0 0 22px;
  font-size: 26.700px; font-weight: 500;
}
.socials { display: flex; align-items: center; gap: 24px; }
.soc-tw { width: 36px; height: 36px; flex: none; margin-right: 6px; }
.embed-label { margin-top: 44px; font-size: 23px; line-height: 32px; }
.embed-input {
  margin-top: 3px; height: 62px;
  border: 2px solid #bfc1c1; border-radius: 8px;
  display: flex; align-items: center; padding: 0 20px 0 22px;
  gap: 27px;
}
.embed-code { flex: 1; min-width: 0; overflow: hidden; text-overflow: ellipsis; white-space: nowrap; font-size: 26.700px; }
.helper { margin-top: 18px; font-size: 23px; line-height: 32px; color: #808285; }
.scrollbar {
  position: absolute; right: 0; top: 289px; bottom: 0;
  width: 10px; background: #e3e5e5; border-radius: 5px;
}
.modal-actions { display: flex; justify-content: flex-end; align-items: center; gap: 37px; height: 72px; }
.btn-cancel { background: none; border: 0; padding: 0; color: #2f69de; font-size: 25.800px; font-weight: 500; }
.btn-save {
  width: 127px; height: 72px;
  background: #e3e5e5; color: #b0b3b3;
  border: 0; border-radius: 8px;
  font-size: 27px; font-weight: 500;
}
```
